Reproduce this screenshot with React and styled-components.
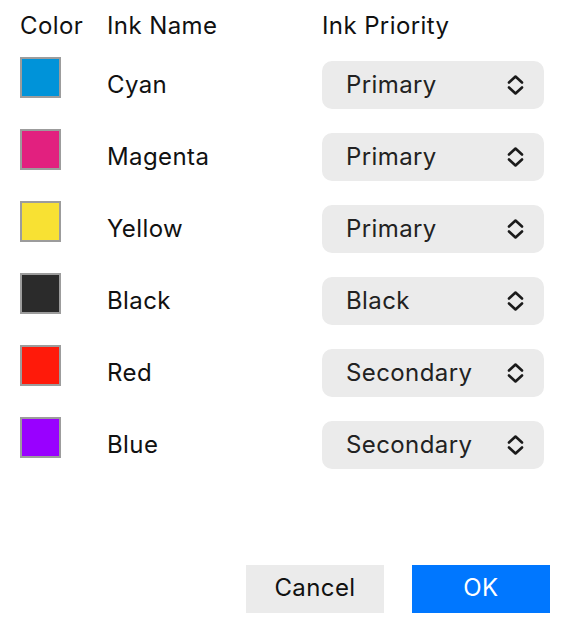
import React from "react";
import styled, { createGlobalStyle } from "styled-components";

const Global = createGlobalStyle`
  html, body { margin: 0; padding: 0; background: #ffffff; }
  body { font-family: Inter, "Noto Sans", sans-serif; -webkit-font-smoothing: antialiased; letter-spacing: 0.4px; }
`;

const Page = styled.div`
  width: 565px;
  height: 632px;
  box-sizing: border-box;
  padding: 11px 15px 0 20px;
  display: flex;
  flex-direction: column;
`;

const Table = styled.div`
  display: grid;
  grid-template-columns: 87px 215px 222px;
  row-gap: 24px;
  align-items: center;
`;

const HeaderCell = styled.div`
  font-size: 24px;
  line-height: 30px;
  color: #111111;
  margin-bottom: -4px;
`;

const Swatch = styled.div`
  width: 41px;
  height: 41px;
  box-sizing: border-box;
  border: 2px solid #9c9c9c;
  background: ${(p) => p.$color};
  align-self: start;
  margin-top: -4px;
`;

const InkName = styled.div`
  font-size: 24px;
  line-height: 30px;
  color: #111111;
  margin-top: -1px;
`;

const Select = styled.div`
  height: 48px;
  border-radius: 10px;
  background: #ebebeb;
  display: flex;
  align-items: center;
  justify-content: space-between;
  padding: 0 20px 2px 24px;
  box-sizing: border-box;
  font-size: 24px;
  color: #222222;
`;

const ChevronBox = styled.span`
  display: flex;
  margin-top: 2px;
`;

const Footer = styled.div`
  display: flex;
  justify-content: flex-end;
  gap: 28px;
  margin-top: 96px;
`;

const Button = styled.div`
  width: 138px;
  height: 48px;
  padding-bottom: 3px;
  box-sizing: border-box;
  display: flex;
  align-items: center;
  justify-content: center;
  font-size: 24px;
  background: ${(p) => (p.$primary ? "#0077ff" : "#ebebeb")};
  color: ${(p) => (p.$primary ? "#ffffff" : "#111111")};
`;

const Chevrons = () => (
  <ChevronBox>
    <svg width="17" height="22" viewBox="0 0 17 22" fill="none">
      <path d="M2 8.5 L8.5 2.5 L15 8.5" stroke="#1a1a1a" strokeWidth="2.6" strokeLinecap="round" strokeLinejoin="round" />
      <path d="M2 13.5 L8.5 19.5 L15 13.5" stroke="#1a1a1a" strokeWidth="2.6" strokeLinecap="round" strokeLinejoin="round" />
    </svg>
  </ChevronBox>
);

const inks = [
  { name: "Cyan", color: "#0093d9", priority: "Primary" },
  { name: "Magenta", color: "#e2207f", priority: "Primary" },
  { name: "Yellow", color: "#f8e133", priority: "Primary" },
  { name: "Black", color: "#2b2b2b", priority: "Black" },
  { name: "Red", color: "#ff1a0a", priority: "Secondary" },
  { name: "Blue", color: "#9900ff", priority: "Secondary" },
];

export default function App() {
  return (
    <>
      <Global />
      <Page>
        <Table>
          <HeaderCell>Color</HeaderCell>
          <HeaderCell>Ink Name</HeaderCell>
          <HeaderCell>Ink Priority</HeaderCell>
          {inks.map((ink) => (
            <React.Fragment key={ink.name}>
              <Swatch $color={ink.color} />
              <InkName>{ink.name}</InkName>
              <Select>
                <span>{ink.priority}</span>
                <Chevrons />
              </Select>
            </React.Fragment>
          ))}
        </Table>
        <Footer>
          <Button>Cancel</Button>
          <Button $primary>OK</Button>
        </Footer>
      </Page>
    </>
  );
}
